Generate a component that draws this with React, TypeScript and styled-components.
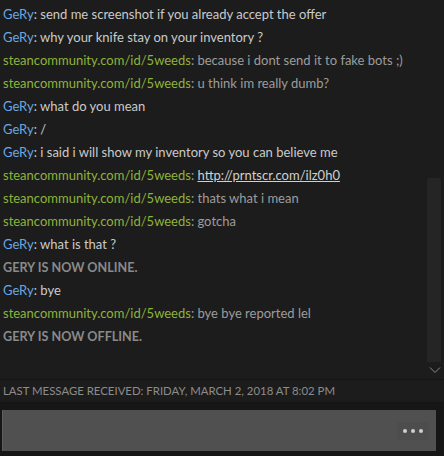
import React from "react";
import styled, { createGlobalStyle } from "styled-components";

const Global = createGlobalStyle`
  html, body { margin: 0; padding: 0; background: #1c1c1c; }
  body { font-family: "Lato", "Open Sans", sans-serif; }
`;

const Window = styled.div`
  width: 444px;
  height: 456px;
  background: #1c1c1c;
  display: flex;
  flex-direction: column;
  overflow: hidden;
`;

const ChatArea = styled.div`
  height: 379px;
  display: flex;
  flex-direction: row;
  border-bottom: 1px solid #141414;
`;

const Messages = styled.div`
  flex: 1;
  padding: 3px 0 0 3px;
  display: flex;
  flex-direction: column;
`;

const Line = styled.div`
  height: 23px;
  line-height: 23px;
  font-size: 13px;
  white-space: nowrap;
  color: #c9c9c9;
`;

const Name = styled.span<{ $me?: boolean }>`
  color: ${(p) => (p.$me ? "#8db43a" : "#6aa7e2")};
`;

const Body = styled.span<{ $me?: boolean }>`
  color: ${(p) => (p.$me ? "#9c9c9c" : "#cacaca")};
`;

const Link = styled.span`
  color: #d0d0d0;
  text-decoration: underline;
`;

const Status = styled.div`
  height: 23px;
  line-height: 23px;
  font-size: 12.6px;
  font-weight: 700;
  color: #8a8a8a;
  text-transform: uppercase;
`;

const ScrollCol = styled.div`
  width: 17px;
  display: flex;
  flex-direction: column;
  align-items: flex-start;
  padding-top: 178px;
`;

const Track = styled.div`
  width: 14px;
  height: 184px;
  background: #252525;
  border-radius: 2px 2px 0 0;
`;

const Chevron = styled.svg`
  margin-top: 4px;
  margin-left: 2px;
`;

const StatusBar = styled.div`
  height: 22px;
  line-height: 22px;
  padding-left: 3px;
  font-size: 11.4px;
  color: #8c8c8c;
  text-transform: uppercase;
  border-bottom: 1px solid #141414;
`;

const InputArea = styled.div`
  flex: 1;
  background: #161616;
  padding: 7px 8px 0 2px;
`;

const InputBox = styled.div`
  height: 41px;
  background: #505050;
  border-left: 1px solid #5e5e5e;
  display: flex;
  align-items: center;
  justify-content: flex-end;
  padding-right: 7px;
`;

const More = styled.div`
  width: 32px;
  height: 18px;
  background: #4d4d4d;
  display: flex;
  align-items: center;
  justify-content: center;
  gap: 4px;
`;

const Dot = styled.span`
  width: 4px;
  height: 4px;
  border-radius: 50%;
  background: #cfcfcf;
`;

type Msg =
  | { kind: "msg"; me: boolean; text: React.ReactNode }
  | { kind: "status"; text: string };

const ME = "steancommunity.com/id/5weeds";

const msgs: Msg[] = [
  { kind: "msg", me: false, text: "send me screenshot if you already accept the offer" },
  { kind: "msg", me: false, text: "why your knife stay on your inventory ?" },
  { kind: "msg", me: true, text: "because i dont send it to fake bots ;)" },
  { kind: "msg", me: true, text: "u think im really dumb?" },
  { kind: "msg", me: false, text: "what do you mean" },
  { kind: "msg", me: false, text: "/" },
  { kind: "msg", me: false, text: "i said i will show my inventory so you can believe me" },
  { kind: "msg", me: true, text: <Link>http://prntscr.com/ilz0h0</Link> },
  { kind: "msg", me: true, text: "thats what i mean" },
  { kind: "msg", me: true, text: "gotcha" },
  { kind: "msg", me: false, text: "what is that ?" },
  { kind: "status", text: "Gery is now online." },
  { kind: "msg", me: false, text: "bye" },
  { kind: "msg", me: true, text: "bye bye reported lel" },
  { kind: "status", text: "Gery is now offline." },
];

export default function App() {
  return (
    <>
      <Global />
      <Window>
        <ChatArea>
          <Messages>
            {msgs.map((m, i) =>
              m.kind === "status" ? (
                <Status key={i}>{m.text}</Status>
              ) : (
                <Line key={i}>
                  <Name $me={m.me}>{m.me ? ME : "GeRy"}</Name>
                  <Body $me={m.me}>: {m.text}</Body>
                </Line>
              )
            )}
          </Messages>
          <ScrollCol>
            <Track />
            <Chevron width="12" height="8" viewBox="0 0 12 8">
              <path d="M1 1.5 L6 6.5 L11 1.5" fill="none" stroke="#8a8a8a" strokeWidth="1" />
            </Chevron>
          </ScrollCol>
        </ChatArea>
        <StatusBar>Last message received: Friday, March 2, 2018 at 8:02 PM</StatusBar>
        <InputArea>
          <InputBox>
            <More>
              <Dot />
              <Dot />
              <Dot />
            </More>
          </InputBox>
        </InputArea>
      </Window>
    </>
  );
}
